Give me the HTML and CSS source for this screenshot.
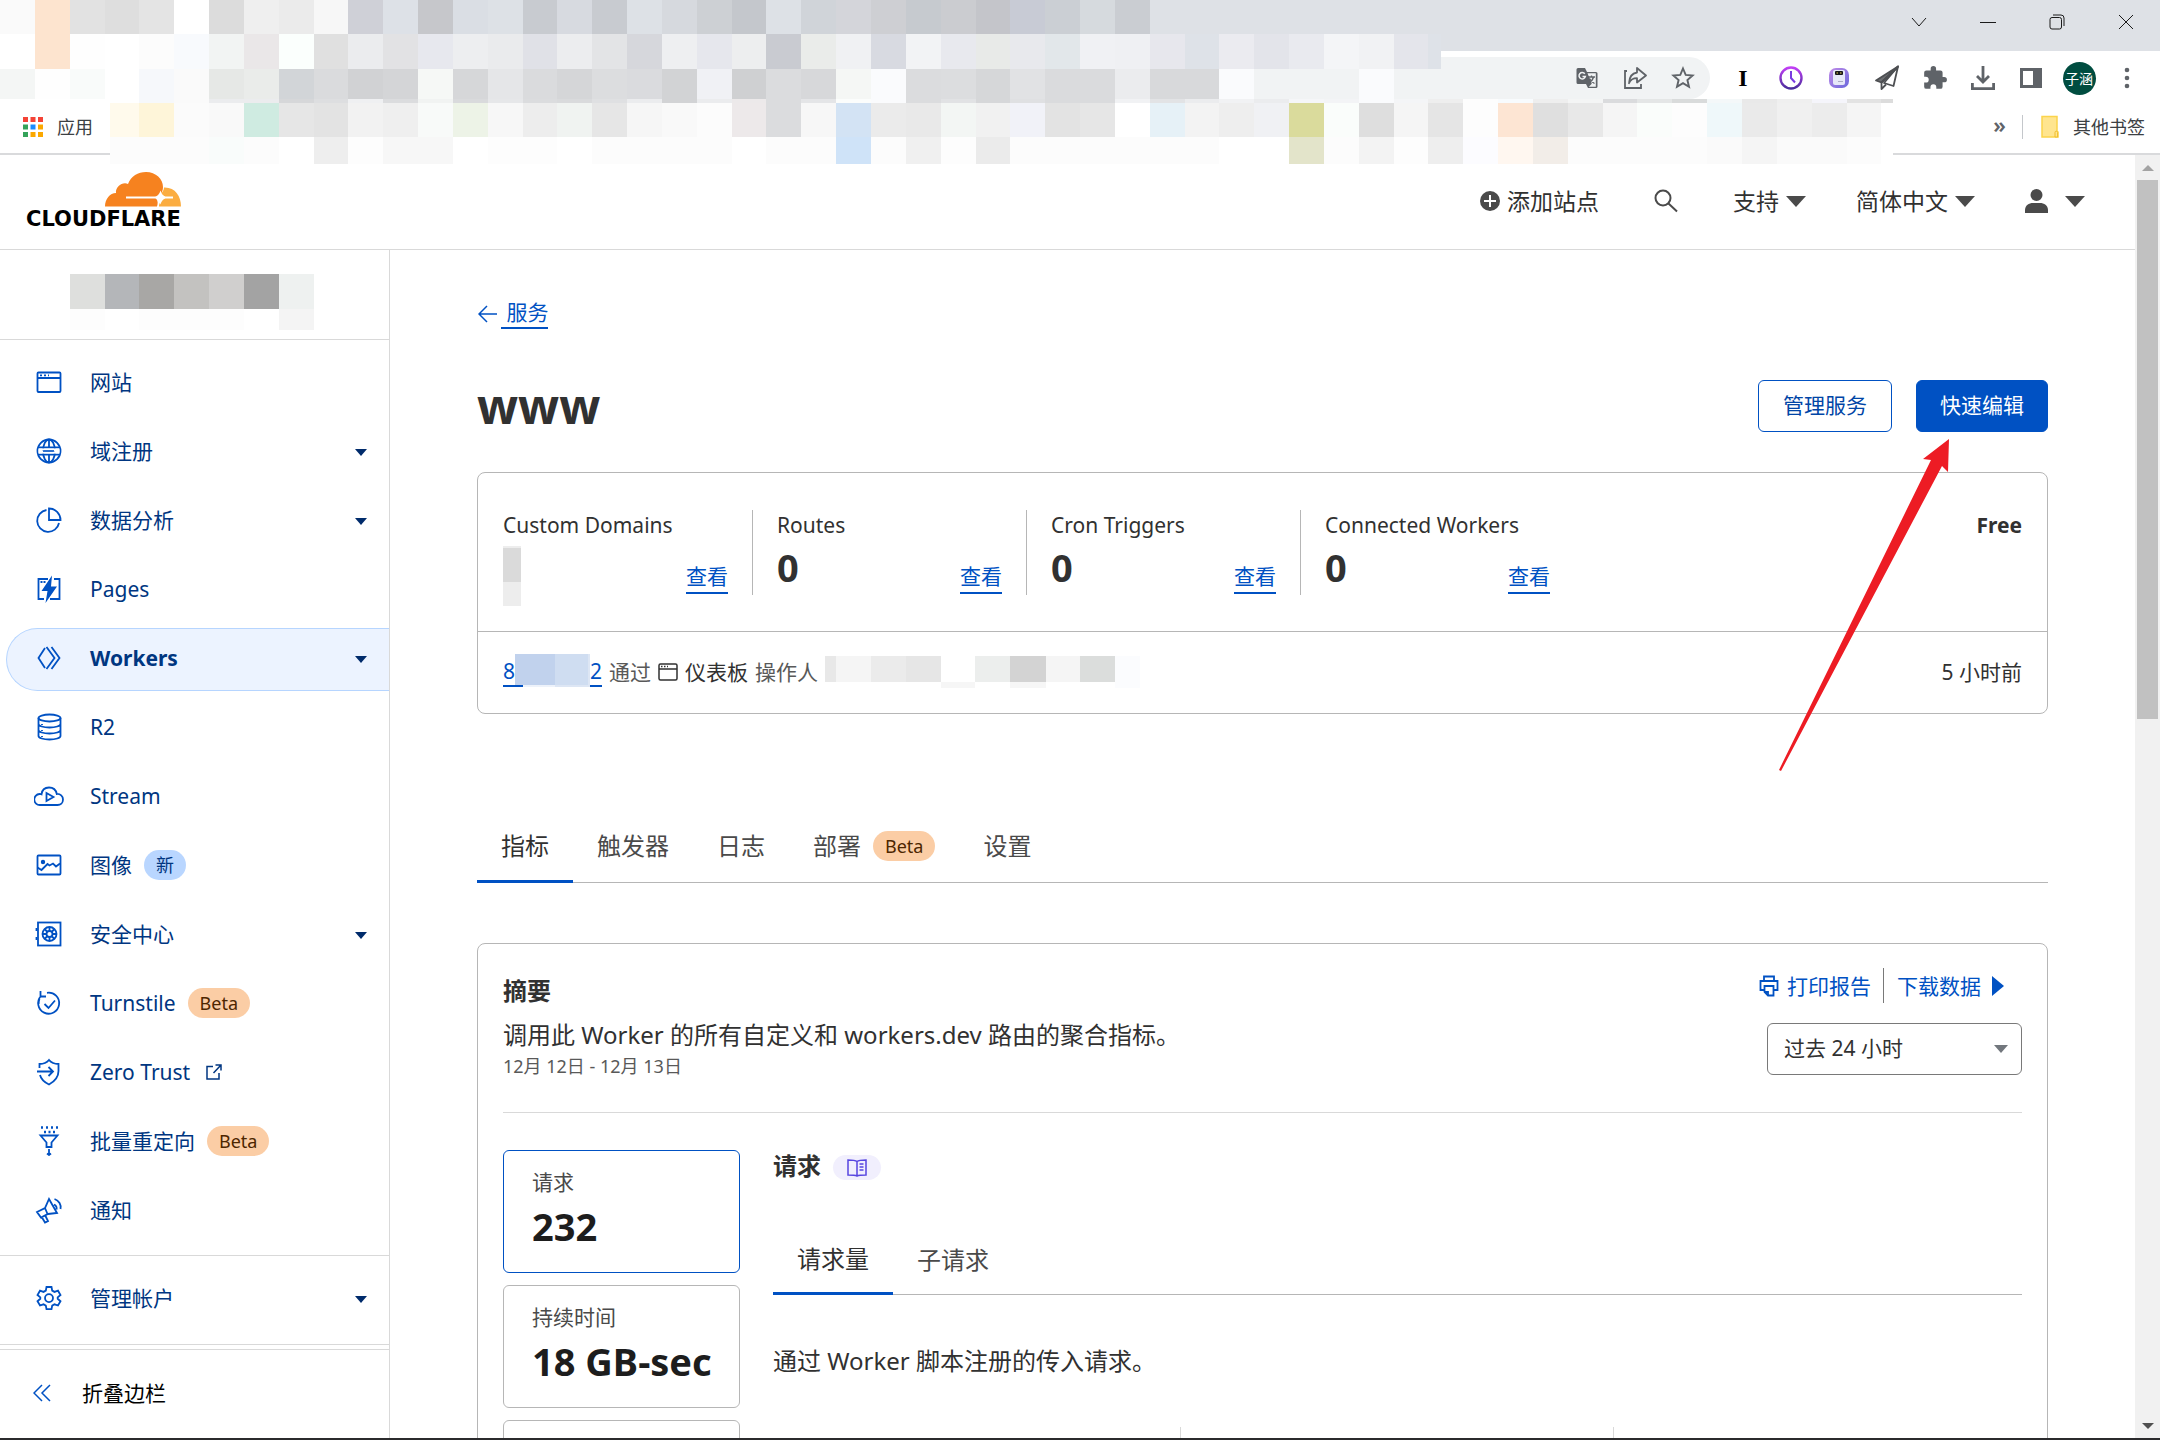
FILE: index.html
```html
<!DOCTYPE html>
<html lang="zh-CN">
<head>
<meta charset="utf-8">
<title>www - Workers</title>
<link rel="stylesheet" href="styles.css">
</head>
<body>
<header class="browser">
  <div class="titlebar">
    <button class="win" aria-label="搜索标签页"><svg width="16" height="16" viewBox="0 0 16 16"><path d="M1 4l7 8 7-8"/></svg></button>
    <button class="win" aria-label="最小化"><svg width="16" height="16" viewBox="0 0 16 16"><path d="M0 8.500h16"/></svg></button>
    <button class="win" aria-label="还原"><svg width="16" height="16" viewBox="0 0 16 16"><rect x="1" y="3.500" width="11.500" height="11.500" rx="2"/><path d="M4 1h8a3 3 0 0 1 3 3v8"/></svg></button>
    <button class="win" aria-label="关闭"><svg width="16" height="16" viewBox="0 0 16 16"><path d="M1 1l14 14M15 1L1 15"/></svg></button>
  </div>
  <div class="toolbar">
    <div class="omnibox">
      <button class="tool" aria-label="翻译"><svg width="24" height="24" viewBox="0 0 24 24"><path d="M2 2h8l2 4h9a1.500 1.500 0 0 1 1.500 1.500v13A1.500 1.500 0 0 1 21 22h-8l-2-4H3a1.500 1.500 0 0 1-1.500-1.500v-13A1.500 1.500 0 0 1 3 2z" fill="#5f6368"/><path d="M12.500 7.200h8.300v13.600h-7l3-3z" fill="#f1f3f4"/><path d="M13 11h7M16.500 9.500V11M18.500 11c-.5 2.500-2.500 4.500-4.500 5.500M14.500 12.500c1 2 3 4 5 5" fill="none" stroke="#5f6368" stroke-width="1.300"/><path d="M9.800 7.800A3.200 3.200 0 1 0 10.400 10.400H7.500" fill="none" stroke="#f1f3f4" stroke-width="1.500"/></svg></button>
      <button class="tool" aria-label="分享"><svg width="24" height="24" viewBox="0 0 24 24" fill="none" stroke="#5f6368" stroke-width="1.800"><path d="M4 5H2v17h16v-4"/><path d="M14 2l9 7.500-9 7v-4.300c-4 0-6.500 1.500-8 5 .3-6 3-10 8-10.700z" stroke-linejoin="round"/></svg></button>
      <button class="tool" aria-label="加入书签"><svg width="24" height="24" viewBox="0 0 24 24" fill="none" stroke="#5f6368" stroke-width="1.900"><path d="M12 2.500l2.700 6.400 6.900.6-5.200 4.500 1.600 6.800-6-3.600-6 3.600 1.600-6.800-5.200-4.500 6.900-.6z"/></svg></button>
    </div>
    <button class="tool ext-i" aria-label="Instapaper">I</button>
    <button class="tool" aria-label="历史"><svg width="26" height="26" viewBox="0 0 26 26" fill="none"><defs><linearGradient id="clk" x2="0" y2="1"><stop stop-color="#c13ff5"/><stop offset="1" stop-color="#4a2d9c"/></linearGradient></defs><circle cx="13" cy="13" r="10.500" stroke="url(#clk)" stroke-width="2.400"/><path d="M13 6v7l4 4.500" stroke="#7a3be0" stroke-width="2"/></svg></button>
    <button class="tool" aria-label="助手"><svg width="20" height="20" viewBox="0 0 20 20"><defs><linearGradient id="bot" x2="1" y2="1"><stop stop-color="#c08be8"/><stop offset="1" stop-color="#6a68dc"/></linearGradient></defs><rect width="20" height="20" rx="7" fill="url(#bot)"/><rect x="4" y="2" width="12" height="15" rx="2" fill="#e6e8f8"/><rect x="6" y="3" width="8" height="4" rx="1" fill="#16161c"/><path d="M7.500 5H9M11 5h1.500" stroke="#e8d44a"/><path d="M9 13.500h5" stroke="#a9aac4"/></svg></button>
    <button class="tool" aria-label="发送"><svg width="26" height="26" viewBox="0 0 26 26" fill="none" stroke="#4d4f52" stroke-width="1.800" stroke-linejoin="round"><path d="M24 1.500L2 15.500l5.500 2z" fill="#6c6e71"/><path d="M24 1.500L10 18l9.500 3z"/><path d="M24 1.500L7.500 17.500v6.500l4.500-4.500"/></svg></button>
    <button class="tool" aria-label="扩展程序"><svg width="26" height="26" viewBox="0 0 24 24"><path d="M20.500 11H19V7a2 2 0 0 0-2-2h-4V3.500a2.500 2.500 0 0 0-5 0V5H4a2 2 0 0 0-2 2v3.800h1.500a2.700 2.700 0 0 1 0 5.400H2V20a2 2 0 0 0 2 2h3.800v-1.500a2.700 2.700 0 0 1 5.400 0V22H17a2 2 0 0 0 2-2v-4h1.500a2.500 2.500 0 0 0 0-5z" fill="#5f6368"/></svg></button>
    <button class="tool" aria-label="下载"><svg width="26" height="26" viewBox="0 0 26 26" fill="none" stroke="#5f6368" stroke-width="2.800"><path d="M13 1v15M7 11l6 6 6-6M2.400 18v5.600h21.200V18"/></svg></button>
    <button class="tool" aria-label="侧边栏"><svg width="24" height="24" viewBox="0 0 24 24"><path d="M1 2h22v20H1z" fill="#5f6368"/><path d="M4 5h10v14H4z" fill="#fff"/></svg></button>
    <button class="tool" aria-label="子涵"><span class="avatar">子涵</span></button>
    <button class="tool" aria-label="菜单"><svg width="6" height="22" viewBox="0 0 6 22" fill="#5f6368"><circle cx="3" cy="3" r="2.300"/><circle cx="3" cy="11" r="2.300"/><circle cx="3" cy="19" r="2.300"/></svg></button>
  </div>
  <nav class="bookmarks">
    <a class="bookmark" href="#"><svg width="20" height="20" viewBox="0 0 20 20"><path d="M0 0h5v5H0zM7.500 0h5v5h-5zM15 0h5v5h-5z" fill="#f44336"/><path d="M0 7.500h5v5H0zM0 15h5v5H0z" fill="#34a35a"/><path d="M7.500 7.500h5v5h-5z" fill="#1a8cff"/><path d="M15 7.500h5v5h-5zM7.500 15h5v5h-5zM15 15h5v5h-5z" fill="#fba800"/></svg>应用</a>
    <span class="more">»</span>
    <a class="bookmark other" href="#"><svg width="18" height="24" viewBox="0 0 18 24"><path d="M1 1.500h15v14.500l1 1v5H1z" fill="#ffe58f" stroke="#fbd44c" stroke-width="1.500"/><path d="M14 22v-4.500a1.300 1.300 0 0 1 2.600 0V22z" fill="#ffe58f" stroke="#f0bd2c"/></svg>其他书签</a>
  </nav>
  <svg class="mosaic" id="mosaic" width="1893" height="164" viewBox="0 0 1893 164" shape-rendering="crispEdges" aria-hidden="true"></svg>
</header>

<div class="viewport">
  <div class="app">
    <header class="topbar">
      <a class="logo" href="#" aria-label="Cloudflare">
        <svg class="cloud" width="76" height="35" viewBox="0 0 76 35"><path d="M0 34.500C0 27 5 21 11 21c-1-6 7-12 12-9C26 4 33 0 41 0c10 0 17 7 17 15 0 4-2 8-5 9.500H21v2h30c2 2 2 5 1 8z" fill="#f6821f"/><path d="M59 15.500C70 15 76 24 76 34.500H54c0-4 3-7 6-8h8v-2h-8c-2-1-4-2-4-3 2-2 3-4 3-6z" fill="#fbad41"/><path d="M48 25.500q6-1 7.500-7 1.500 6 7 7-5.500 1-7 7-1.500-6-7.500-7z" fill="#fff"/></svg>
        <span class="wordmark">CLOUDFLARE</span>
      </a>
      <nav class="topnav">
        <a class="topitem" href="#"><svg width="20" height="20" viewBox="0 0 20 20"><circle cx="10" cy="10" r="10" fill="#4a4a4a"/><path d="M10 4v12M4 10h12" stroke="#fff" stroke-width="2"/></svg>添加站点</a>
        <button class="topitem search" aria-label="搜索"><svg width="24" height="24" viewBox="0 0 24 24" fill="none" stroke="#4a4a4a" stroke-width="2"><circle cx="9" cy="9" r="7.500"/><path d="M14.500 14.500l8.500 8"/></svg></button>
        <button class="topitem">支持<span class="tri"></span></button>
        <button class="topitem">简体中文<span class="tri"></span></button>
        <button class="topitem user" aria-label="用户"><svg width="23" height="24" viewBox="0 0 23 24" fill="#4a4a4a"><circle cx="11.500" cy="6" r="6"/><path d="M0 24v-3c0-4.500 4-7 8-7h7c4 0 8 2.500 8 7v3z"/></svg><span class="tri"></span></button>
      </nav>
    </header>
    <div class="columns">
      <aside class="sidebar">
        <div class="account">
          <svg width="244" height="56" viewBox="70 274 244 56" shape-rendering="crispEdges" role="img" aria-label="帐户"><path d="M70 274h35v35H70z" fill="#dedfdd"/><path d="M105 274h34v35h-34z" fill="#b4b6b9"/><path d="M139 274h35v35h-35z" fill="#a8a7a5"/><path d="M174 274h35v35h-35z" fill="#c3c2c0"/><path d="M209 274h35v35h-35z" fill="#d0cfce"/><path d="M244 274h35v35h-35z" fill="#a3a3a3"/><path d="M279 274h35v35h-35z" fill="#eef1f0"/><path d="M279 309h35v21h-35z" fill="#f4f4f4"/><path d="M70 309h35v21H70zM139 309h105v21H139z" fill="#fdfdfd"/></svg>
        </div>
        <nav class="menu">
          <a href="#"><svg width="30" height="30" viewBox="0 0 30 30"><rect x="3.500" y="5.500" width="23" height="19.500" rx="1"/><path d="M3.500 11h23M6 8.300h2M10 8.300h2M14 8.300h1" /></svg>网站</a>
          <a href="#"><svg width="30" height="30" viewBox="0 0 30 30"><circle cx="15" cy="15" r="11.500"/><ellipse cx="15" cy="15" rx="6" ry="11.500"/><path d="M15 3.500v8M15 19v7.500M4 11.500h22M4 18.500h22"/><path d="M4.500 12.400h21v5.200h-21z" fill="#fff" stroke="none"/><path d="M9 14l1 2 1-2 1 2 1-2 1 2 1-2 1 2 1-2 1 2 1-2 1 2" stroke-width="1"/></svg>域注册<span class="caret"></span></a>
          <a href="#"><svg width="30" height="30" viewBox="0 0 30 30"><path d="M12.500 5a11 11 0 1 0 12.500 13"/><path d="M15 3.500V15h11.500A11.500 11.500 0 0 0 15 3.500z"/></svg>数据分析<span class="caret"></span></a>
          <a href="#"><svg width="30" height="30" viewBox="0 0 30 30"><path d="M14 5H4.500v20H10M20 5h5.500v20H16"/><path d="M6.500 8h5" stroke-dasharray="2 1"/><path d="M18 1.500L7.500 17h6l-2 12L23 12.500h-6z" fill="#0051c3" stroke="none"/></svg>Pages</a>
          <a class="active" href="#"><svg width="30" height="30" viewBox="0 0 30 30"><path d="M11 5L4.500 15 11 25M12.500 4l8 11-8 11M17.500 4l8 11-8 11"/></svg>Workers<span class="caret"></span></a>
          <a href="#"><svg width="30" height="30" viewBox="0 0 30 30"><ellipse cx="15.500" cy="6" rx="11" ry="3.500"/><path d="M4.500 6v18c0 2 5 3.500 11 3.500s11-1.500 11-3.500V6M4.500 12c0 2 5 3.500 11 3.500s11-1.500 11-3.500M4.500 18c0 2 5 3.500 11 3.500s11-1.500 11-3.500M8 12v1M8 18v1M8 24v1"/></svg>R2</a>
          <a href="#"><svg width="30" height="30" viewBox="0 0 30 30"><path d="M6 24a5.500 5.500 0 0 1-.5-11c1 0 1.500 0 2 .3C8 9 11 6.500 15 6.500s7 2.500 7.800 6.500c3.500-.3 6.200 2.200 6.200 5.500s-2.500 5.500-5.500 5.500z"/><path d="M12.500 12v8l7-4z"/></svg>Stream</a>
          <a href="#"><svg width="30" height="30" viewBox="0 0 30 30"><rect x="3.500" y="5.500" width="23" height="19" rx="1"/><path d="M3.500 17.500l4 2.500 6-6 2 1.500 3.500-2 3 3 4-3"/><circle cx="9" cy="12" r="1.300" fill="#0051c3"/></svg>图像<span class="badge new">新</span></a>
          <a href="#"><svg width="30" height="30" viewBox="0 0 30 30"><rect x="4" y="3.500" width="22.500" height="23"/><circle cx="15.500" cy="15" r="7"/><circle cx="15.500" cy="15" r="3"/><path d="M15.500 8v4M15.500 18v4M8.500 15h4M18.500 15h4M10.500 10l3 3M17.500 17l3 3M20.500 10l-3 3M13.500 17l-3 3M2.500 9v3M2.500 18v3"/></svg>安全中心<span class="caret"></span></a>
          <a href="#"><svg width="30" height="30" viewBox="0 0 30 30"><path d="M7 8a10.500 10.500 0 1 0 6-3.200M5.500 11a10.500 10.500 0 0 0-.9 5M6.500 3v5.500H12"/><path d="M10.500 16l4 4 6.500-7.500"/></svg>Turnstile<span class="badge beta">Beta</span></a>
          <a href="#"><svg width="30" height="30" viewBox="0 0 30 30"><path d="M5.500 11V7c4 0 7-1 9.500-4 2.500 3 5.500 4 9.500 4v7c0 7-5 11-9.500 13.500C11 25.500 7 22 6 18"/><path d="M3 14.500h16M14.500 10l4.500 4.500-4.500 4.500"/></svg>Zero Trust<svg class="ext" width="16" height="16" viewBox="0 0 16 16"><path d="M7 2.500H1V15h12V9M9.500 1H15v5.500M15 1L7.500 9"/></svg></a>
          <a href="#"><svg width="30" height="30" viewBox="0 0 30 30"><path d="M7 1.500h2M12 1.500h2M17 1.500h2M22 1.500h2M10 6h2M14.500 6h2M19 6h2" stroke-width="2.500"/><path d="M6.500 9.500h17l-6 7v4.500h-5v-4.500zM15 23v6M13 27.500l2 1.500 2-1.500"/></svg>批量重定向<span class="badge beta">Beta</span></a>
          <a href="#"><svg width="30" height="30" viewBox="0 0 30 30"><path d="M3 17l8-4 4-9 8 14-9 1-7 3.500zM11 13l2.500 6M8 22.500l3 5 3-1.500-2.500-5M20 9.500c2 1 3 3 2.500 5M20.500 4c4.500 1.500 7 6 6 10"/></svg>通知</a>
        </nav>
        <nav class="menu manage">
          <a href="#"><svg width="30" height="30" viewBox="0 0 30 30"><path d="M12.500 4h5l.7 3.600 2.300 1.300 3.500-1.200 2.500 4.300-2.800 2.400v1.400l2.800 2.400-2.500 4.300-3.500-1.200-2.300 1.300-.7 3.600h-5l-.7-3.600-2.300-1.300L6 22.500l-2.500-4.300 2.800-2.400v-1.400L3.500 12 6 7.700l3.500 1.200 2.300-1.300z"/><circle cx="15" cy="15.100" r="4"/></svg>管理帐户<span class="caret"></span></a>
        </nav>
        <button class="collapse"><svg width="18" height="18" viewBox="0 0 18 18"><path d="M9 1L1 9l8 8M17 1L9 9l8 8"/></svg>折叠边栏</button>
      </aside>
      <main class="main">
        <div class="back"><svg width="20" height="18" viewBox="0 0 20 18"><path d="M9 1L1 9l8 8M1 9h18"/></svg><a class="link" href="#">&nbsp;服务</a></div>
        <div class="titlerow">
          <h1>www</h1>
          <div class="actions"><button class="btn">管理服务</button><button class="btn primary">快速编辑</button></div>
        </div>
        <section class="card overview">
          <div class="stats">
            <div class="stat"><span>Custom Domains</span><div class="statline"><svg width="18" height="60" viewBox="0 0 18 60" aria-hidden="true"><path d="M0 0h18v2H0z" fill="#ededed"/><path d="M0 2h18v34H0z" fill="#dadada"/><path d="M0 36h18v24H0z" fill="#ededed"/></svg><a class="link" href="#">查看</a></div></div>
            <div class="stat"><span>Routes</span><div class="statline"><b>0</b><a class="link" href="#">查看</a></div></div>
            <div class="stat"><span>Cron Triggers</span><div class="statline"><b>0</b><a class="link" href="#">查看</a></div></div>
            <div class="stat"><span>Connected Workers</span><div class="statline"><b>0</b><a class="link" href="#">查看</a></div></div>
            <strong class="plan">Free</strong>
          </div>
          <div class="deploy">
            <a class="link hash" href="#">8<svg width="75" height="33" viewBox="0 0 75 33" shape-rendering="crispEdges" aria-hidden="true"><path d="M0 0h40v31H0z" fill="#c1d2ed"/><path d="M40 0h33v31H40z" fill="#cfddf1"/><path d="M8 31h32v2H8z" fill="#edf2fa"/><path d="M40 31h33v2H40zM73 0h2v33h-2z" fill="#dde6f4"/></svg>2</a>
            <span class="muted">通过</span>
            <svg class="dash" width="20" height="18" viewBox="0 0 20 18"><rect x="1" y="1" width="18" height="16" rx="1.500"/><path d="M1 6h18M3 3.500h1.500M6 3.500h1.500M9 3.500h1"/></svg>
            <span>仪表板</span>
            <span class="muted">操作人</span>
            <svg width="315" height="32" viewBox="0 0 315 32" shape-rendering="crispEdges" aria-hidden="true"><path d="M0 0h11v26H0z" fill="#e8e8e8"/><path d="M11 0h35v26H11zM221 0h34v26h-34z" fill="#f5f5f5"/><path d="M46 0h35v26H46z" fill="#ebebeb"/><path d="M81 0h35v26H81z" fill="#e6e6e6"/><path d="M116 26h34v6h-34zM185 26h36v6h-36z" fill="#f6f6f6"/><path d="M150 0h35v26h-35z" fill="#eceeed"/><path d="M185 0h36v26h-36z" fill="#d3d3d3"/><path d="M255 0h35v26h-35z" fill="#dbdddc"/><path d="M290 0h25v32h-25z" fill="#fbfcfe"/></svg>
            <time class="when">5 小时前</time>
          </div>
        </section>
        <nav class="tabs">
          <a class="on" href="#">指标</a><a href="#">触发器</a><a href="#">日志</a><a href="#">部署<span class="badge beta">Beta</span></a><a href="#">设置</a>
        </nav>
        <section class="card metrics">
          <div class="summary">
            <div class="about">
              <h2>摘要</h2>
              <p>调用此 Worker 的所有自定义和 workers.dev 路由的聚合指标。</p>
              <small>12月 12日 - 12月 13日</small>
            </div>
            <div class="tools">
              <div class="exports">
                <button class="textbtn"><svg width="20" height="22" viewBox="0 0 20 22"><path d="M5 6V1.500h10V6M5 15H1.500V6h17v9H15"/><path d="M5.500 11h9v9.500H9L5.500 17z"/><path d="M9 20.500V17H5.500"/></svg>打印报告</button>
                <button class="textbtn download">下载数据<span class="play"></span></button>
              </div>
              <select class="range" aria-label="时间范围"><option>过去 24 小时</option></select>
            </div>
          </div>
          <div class="detail">
            <div class="kpis">
              <button class="kpi on"><span>请求</span><b>232</b></button>
              <button class="kpi"><span>持续时间</span><b>18 GB-sec</b></button>
              <button class="kpi" aria-label="更多指标"></button>
            </div>
            <div class="panel">
              <h3>请求<a class="docs" href="#" aria-label="文档"><svg width="20" height="18" viewBox="0 0 20 18"><path d="M10 2.500V17M10 2.500C8 1 5 1 1 1v15c4 0 7 0 9 1 2-1 5-1 9-1V1c-4 0-7 0-9 1.500zM12.500 5h4M12.500 8h4M12.500 11h4"/></svg></a></h3>
              <nav class="tabs small"><a class="on" href="#">请求量</a><a href="#">子请求</a></nav>
              <p>通过 Worker 脚本注册的传入请求。</p>
              <div class="chart"><i></i><i></i></div>
            </div>
          </div>
        </section>
      </main>
    </div>
  </div>
  <div class="scrollbar" aria-hidden="true"><span class="up"></span><span class="thumb"></span><span class="down"></span></div>
  <svg class="pointer" width="172" height="333" viewBox="0 0 172 333" aria-hidden="true"><path d="M0 331L152 21l-8-1L170 0l-1 33-6-6L2 332z" fill="#ed1c24"/></svg>
</div>
<script src="mosaic.js"></script>
</body>
</html>
```
FILE: mosaic.js
```js
// Colour blocks that hide the open tabs, the address and the bookmarks.
const CELL = 34.84;
const rows = [
  { y: 0, h: 34, first: 0, colors: "fafafa fde4cf e2e2e2 dedede e4e4e4 ffffff dcdcdc efefef ebebeb f7f7f7 cfd0d7 dde1e7 c6c7cb dadee4 dde1e6 c8cbd0 d7dae0 c8cbd0 dde1e6 d6d9de cdd0d4 c4c7cc dde1e6 d0d4d9 d4d5da cecfd3 c6cacf cbccd0 c4c5ca c8cbd5 cbcfd4 d6dade cacdd2" },
  { y: 34, h: 35, first: 0, colors: "ffffff fde4cf fefefe ffffff fcfcfc f8fafd f2f4f3 eae7e8 fbfffd e0e0e0 ebecee e2e2e4 e7e8ee edeef0 eaebed e0e1e7 ecedef e3e4e6 d6d7dc eeeff1 e6e7ed edeeef c9cbd1 eaecea f0f1f3 d8dae1 f2f3f5 e8e9ee e8eae8 e8e9ed e2e7ea f0f1f4 eff0f3 e7e7ed dee2e8 ebebf0 e3e4ea e9eaef f4f5f7 f1f2f4 e4e5eb", tail: ["dee2e8", 13] },
  { y: 69, h: 30, first: 0, colors: "f4f6f5 fefefe f9fbfa ffffff f6f8fb fafafa e6e8e6 eaecea d2d5d8 dadbdd d1d2d4 d4d5d7 f6f8f6 d6d7d9 e5e6e8 dadbdd d5d6d8 dcdddf dadbde d2d3d5 f0f1f5 cfd0d2 dbdcde d7d8da f5f7f5 fafbfd dbdcde dcdddf d6d7d9 e1e2e4 dadbdd dadbdd ebecee d8d9db d8d9db fafbfd f1f3f4 f1f3f4 f1f3f4 fafbfd f1f3f4" },
  { y: 99, h: 4, first: 0, colors: "ffffff ffffff ffffff ffffff f6f8fb fafafa ebecee ebecee d6d7d9 dddee0 eff0f2 dbdcde f1f3f2 d9dadc e6e7e9 dbdcde d9dadc dfe0e2 ebecee d2d3d5 ebecee ece9ea dbdcde e4e5e7 fbfdfc fafbfd dbdcde e1e2e4 d6d7d9 dfe0e2 dadbdd dadbdd f1f2f4 e2e3e5 ebecee f1f2f4 ebecee f5f6f8 f3f4f6 fafbfd f4f5f7 eeeeee fdfdfd f8fbfd eeeeee f4f5f5 dadbdd e4e6e6 d9dbdb f4f8f9 e9e9e9 efefef f5f5fb e3e3e3", tail: ["dcdcdc", 12] },
  { y: 103, h: 34, first: 4, colors: "fef5d9 fbfbfb f9f9f9 cfebe1 e6e6e6 e3e3e3 f2f2f2 efefef f8faf9 edf3e7 f7f7f7 ededed f0f3f1 e6e6e6 f6f6f6 f9f9f9 fcfcfc ede9ea dbdcde f7f7f7 d3e3f4 ebebeb e9e9e9 f3f6f4 f1f1f1 f1f2f8 e3e3e3 e6e6e6 ffffff e6f1f7 f3f3f3 eeeeee f0f1f4 dadb9c fafdfb dedede f5f5f5 e5e5e5 fdfdfd fde5d3 dfdfdf e8e8e8 f5f5f5 fafdfb fdfdfd eff8fa eaeaea f0f0f0 ececec f5f5f5", lead: "fffaec" },
  { y: 137, h: 27, first: 4, colors: "fcfcfc fcfcfc f9fcfb fcfcfc ffffff eeeeee fdfdfd f7f7f7 f7f7f7 ffffff fdfdfd fdfdfd ffffff fcfcfc fcfcfc fcfcfc fcfcfc ffffff fcfcfc fcfcfc cfe3f8 fcfcfc f0f0f0 fdfdfd ebebeb fcfcfc fcfcfc fcfcfc fcfcfc fcfcfc fcfcfc ffffff ffffff e3e4ca fcfcfc f3f3f3 fdfdfd eeeeee fcfcff fff7f0 f2ede8 fcfcfc fcfcfc fcfcfc fcfcfc fafafa f5f5f5 fafafa fafafa fcfcfc", lead: "fcfcfc", tail: ["ffffff", 12] }
];
const svg = document.getElementById("mosaic");
function block(x, y, width, height, color) {
  const rect = document.createElementNS("http://www.w3.org/2000/svg", "rect");
  for (const [name, value] of Object.entries({ x, y, width, height, fill: "#" + color })) rect.setAttribute(name, value);
  svg.append(rect);
}
for (const { y, h, first, colors, lead, tail } of rows) {
  const list = colors.split(" ");
  if (lead) block(110, y, 29, h, lead);
  list.forEach((color, i) => {
    const x = Math.round((first + i) * CELL);
    block(x, y, Math.round((first + i + 1) * CELL) - x, h, color);
  });
  if (tail) block(Math.round((first + list.length) * CELL), y, tail[1], h, tail[0]);
}
```
FILE: styles.css
```css
* { box-sizing: border-box; }
body {
  margin: 0;
  height: 100vh;
  display: flex;
  flex-direction: column;
  overflow: hidden;
  border-bottom: 2px solid #2b2b2d;
  background: #fff;
  color: #313131;
  font: 21px/32px "Noto Sans", "Noto Sans CJK SC", sans-serif;
}
button { font: inherit; color: inherit; background: none; border: 0; padding: 0; }
a { color: inherit; text-decoration: none; }
h1, h2, h3, p { margin: 0; }
svg { flex: none; display: block; }

/* browser window */
.browser { position: relative; flex: none; border-bottom: 2px solid #d9dadc; }
.mosaic { position: absolute; left: 0; top: 0; }
.titlebar { display: flex; justify-content: flex-end; height: 51px; background: #dee1e6; }
.win { width: 69px; height: 43px; display: flex; align-items: center; justify-content: center; }
.win svg { fill: none; stroke: #1a1a1a; stroke-width: 1; }
.toolbar { display: flex; align-items: center; height: 54px; padding-right: 9px; }
.omnibox { flex: 1; display: flex; justify-content: flex-end; height: 42px; margin: 0 9px 0 150px; padding-right: 3px; border-radius: 21px; background: #f1f3f4; }
.tool { width: 48px; height: 42px; display: flex; align-items: center; justify-content: center; }
.ext-i { font: bold 24px "Liberation Serif", serif; color: #000; }
.avatar { width: 33px; height: 33px; border-radius: 50%; background: #004d40; color: #fff; font-size: 14px; line-height: 33px; text-align: center; }
.bookmarks { display: flex; align-items: center; height: 48px; padding: 0 15px 4px 23px; font-size: 18px; line-height: 24px; color: #3c4043; }
.bookmark { display: flex; align-items: center; gap: 14px; }
.more { margin-left: auto; padding: 0 16px 6px; font-size: 22px; font-weight: 600; color: #5f6368; }
.other { border-left: 1px solid #c4c7cb; padding-left: 18px; }

/* page */
.viewport { position: relative; flex: 1; min-height: 0; display: flex; }
.app { flex: 1; display: flex; flex-direction: column; overflow: hidden; }
.topbar { flex: none; display: flex; justify-content: space-between; height: 95px; padding: 0 50px 0 26px; border-bottom: 1px solid #d9d9d9; }
.logo { display: flex; flex-direction: column; align-items: flex-end; padding-top: 17px; }
.wordmark { font: bold 21px/24px "DejaVu Sans", sans-serif; color: #000; }
.topnav { display: flex; align-items: center; gap: 50px; padding-bottom: 2px; font-size: 23px; }
.topitem { display: flex; align-items: center; gap: 7px; }
.search { margin: 0 5px; }
.user { gap: 17px; }
.tri { border: 10px solid transparent; border-top: 11px solid #4a4a4a; border-bottom: 0; }
.columns { flex: 1; min-height: 0; display: flex; }

.sidebar { flex: none; width: 390px; border-right: 1px solid #d9d9d9; display: flex; flex-direction: column; }
.account { flex: none; height: 90px; padding: 24px 70px 0; border-bottom: 1px solid #d9d9d9; }
.menu { flex: none; display: flex; flex-direction: column; gap: 6px; padding: 12px 0 12px 6px; border-bottom: 1px solid #d9d9d9; color: #003681; }
.menu a { display: flex; align-items: center; height: 63px; padding: 0 22px 3px 27px; border: 1px solid transparent; border-right: 0; border-radius: 32px 0 0 32px; }
.menu svg { margin-right: 26px; fill: none; stroke: #0051c3; stroke-width: 1.8; }
.menu .ext { margin: 0 0 0 16px; stroke: #003681; stroke-width: 1.5; }
.menu .active { background: #ecf3ff; border-color: #b6d5ff; font-weight: bold; }
.menu.manage { padding-bottom: 13px; }
.caret { margin: 2px 0 0 auto; border: 6px solid transparent; border-top: 7px solid #002b6b; border-bottom: 0; }
.badge { margin-left: 12px; padding: 0 12px; border-radius: 15px; font-size: 18px; line-height: 30px; }
.beta { background: #fbcda5; color: #4d2600; }
.new { background: #b9d6ff; color: #003681; }
.collapse { flex: 1; margin-top: 4px; padding: 0 0 3px 33px; display: flex; align-items: center; gap: 31px; border-top: 1px solid #d9d9d9; color: #000; }
.collapse svg, .back svg { fill: none; stroke: #0051c3; stroke-width: 1.5; }

.main { flex: 1; min-width: 0; padding: 48px 87px 0; }
.link { color: #0051c3; border-bottom: 2px solid #0051c3; }
.back { display: flex; align-items: center; gap: 3px; padding-left: 1px; }
.back .link { line-height: 29px; }
.titlerow { display: flex; align-items: center; justify-content: space-between; margin-top: 50px; }
h1 { font-size: 48px; line-height: 54px; }
.actions { display: flex; gap: 24px; }
.btn { height: 52px; padding: 0 24px 2px; border: 1px solid #0051c3; border-radius: 6px; color: #0045a6; }
.primary { padding: 0 23px 2px; background: #0051c3; color: #fff; }
.card { border: 1px solid #b6b6b6; border-radius: 8px; }
.overview { margin-top: 39px; }
.stats { display: flex; height: 158px; padding: 37px 25px 0; }
.stat { width: 274px; height: 85px; padding-right: 24px; }
.stat + .stat { border-left: 1px solid #b6b6b6; padding-left: 24px; }
.stat:first-child { width: 249px; }
.stat span { display: block; line-height: 30px; }
.statline { display: flex; justify-content: space-between; height: 60px; margin-top: 6px; }
.statline b { font-size: 38px; line-height: 42px; }
.statline .link { height: 32px; margin-top: 16px; line-height: 29px; }
.plan { margin-left: auto; line-height: 30px; }
.deploy { display: flex; align-items: center; gap: 7px; height: 82px; padding: 0 25px 2px; border-top: 1px solid #b6b6b6; }
.hash { display: flex; align-items: center; height: 31px; line-height: 30px; }
.muted { color: #595959; }
.dash { fill: none; stroke: #313131; stroke-width: 1.5; }
.when { margin-left: auto; }

.tabs { display: flex; height: 73px; margin-top: 96px; border-bottom: 1px solid #b6b6b6; font-size: 24px; line-height: 30px; color: #4a4a4a; }
.tabs a { display: flex; align-items: center; height: 73px; padding: 0 24px 2px; }
.tabs .on { border-bottom: 3px solid #0051c3; padding: 3px 24px 2px; color: #313131; }
.metrics { margin-top: 60px; padding: 0 25px; }
.summary { display: flex; justify-content: space-between; height: 169px; border-bottom: 1px solid #d9d9d9; }
.about { padding-top: 29px; }
h2, h3 { font-size: 24px; line-height: 36px; }
.about p { margin-top: 8px; font-size: 24px; line-height: 36px; }
.about small { display: block; font-size: 18px; line-height: 26px; color: #595959; }
.tools { display: flex; flex-direction: column; align-items: flex-end; padding-top: 24px; }
.exports { display: flex; height: 35px; }
.textbtn { display: flex; align-items: center; gap: 8px; padding: 0 12px 0 0; color: #0051c3; }
.textbtn svg { fill: none; stroke: #0051c3; stroke-width: 1.8; }
.download { gap: 11px; padding: 0 18px 0 13px; border-left: 1px solid #797979; }
.play { border: 10px solid transparent; border-left: 12px solid #0051c3; border-right: 0; }
.range {
  width: 255px; height: 52px; margin-top: 20px; padding: 0 16px 2px;
  border: 1px solid #797979; border-radius: 6px; appearance: none; font: inherit; color: #313131;
  background: url("data:image/svg+xml,%3Csvg xmlns='http://www.w3.org/2000/svg' width='14' height='8'%3E%3Cpath d='M0 0h14L7 8z' fill='%2372777d'/%3E%3C/svg%3E") no-repeat right 13px center #fff;
}
.detail { display: flex; gap: 33px; padding-top: 37px; }
.kpis { flex: none; width: 237px; display: flex; flex-direction: column; gap: 12px; }
.kpi { height: 123px; padding: 0 0 3px 28px; border: 1px solid #b6b6b6; border-radius: 6px; text-align: left; display: flex; flex-direction: column; justify-content: center; color: #4a4a4a; }
.kpi.on { border-color: #0051c3; }
.kpi b { font-size: 38px; line-height: 56px; color: #1d1d1d; }
.panel { flex: 1; }
h3 { display: flex; align-items: center; line-height: 32px; }
.docs { display: flex; align-items: center; justify-content: center; width: 48px; height: 25px; margin: 3px 0 0 12px; border-radius: 13px; background: #f1effd; }
.docs svg { fill: none; stroke: #5746e0; stroke-width: 1.5; }
.tabs.small { margin-top: 40px; }
.tabs.small a { padding-top: 5px; }
.panel p { margin-top: 48px; font-size: 24px; line-height: 36px; }
.chart { display: flex; gap: 432px; height: 200px; margin-top: 48px; padding-left: 407px; }
.chart i { border-left: 1px solid #d9d9d9; }

.scrollbar { flex: none; width: 25px; display: flex; flex-direction: column; align-items: center; background: #f1f1f1; }
.up { margin: 10px 0 9px; border: 6px solid transparent; border-bottom: 6px solid #a3a3a3; border-top: 0; }
.thumb { width: 21px; height: 42%; background: #c1c1c1; }
.down { margin: auto 0 9px; border: 6px solid transparent; border-top: 6px solid #505050; border-bottom: 0; }
.pointer { position: absolute; right: 209px; top: 284px; }
```
